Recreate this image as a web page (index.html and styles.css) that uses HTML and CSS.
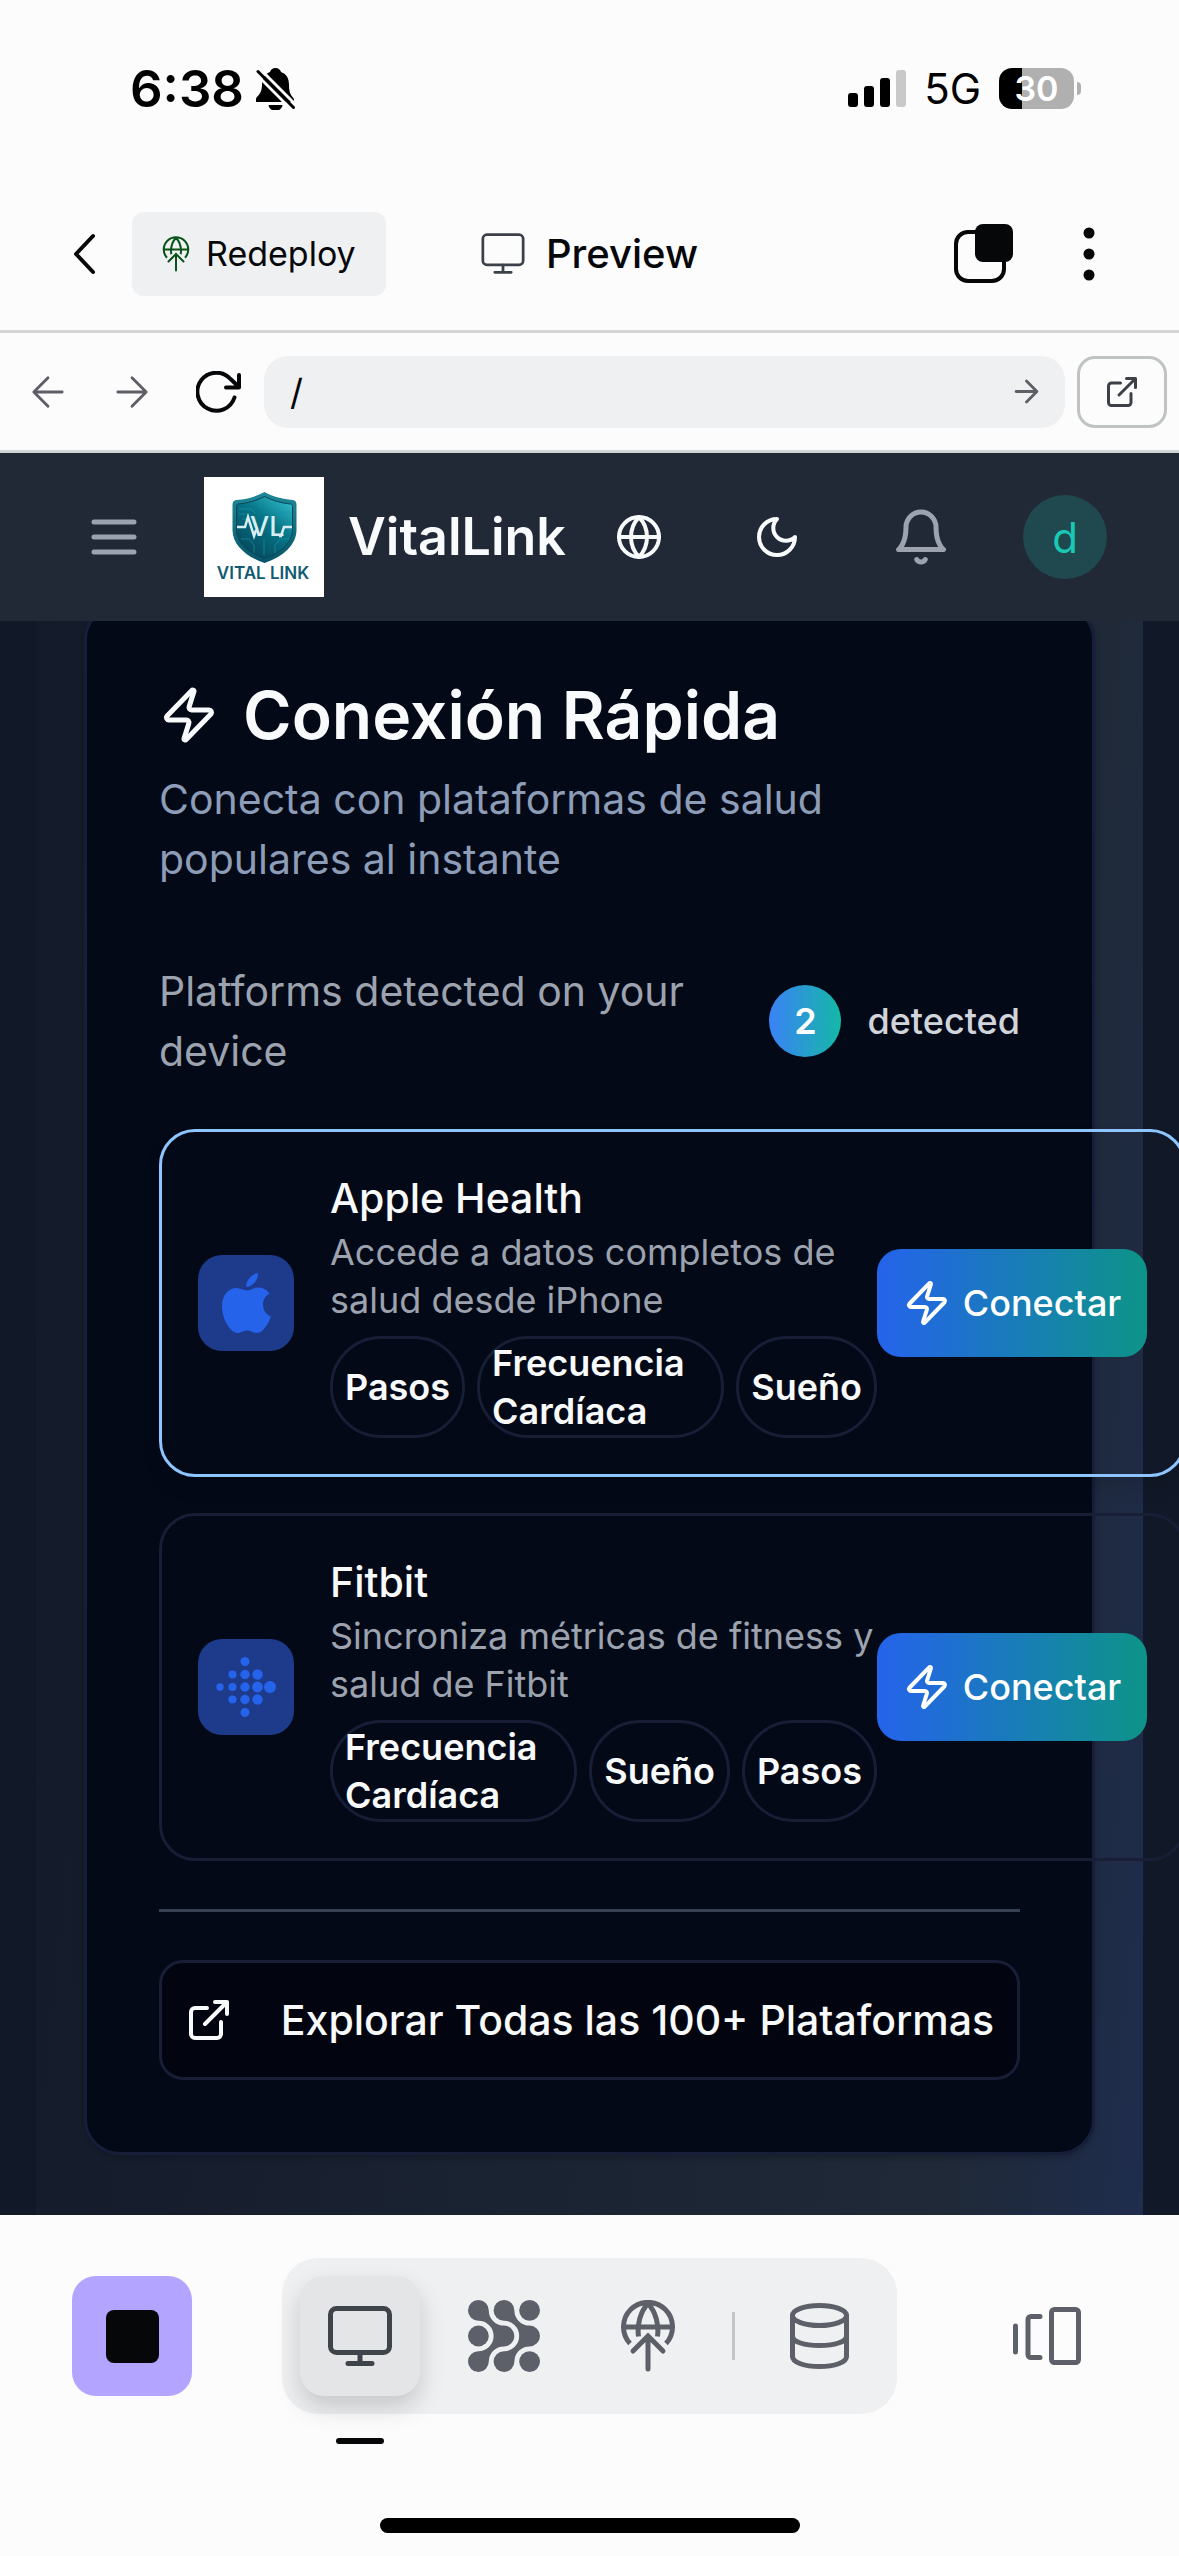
FILE: index.html
```html
<!DOCTYPE html>
<html lang="es">
<head>
<meta charset="utf-8">
<meta name="viewport" content="width=device-width, initial-scale=1">
<title>VitalLink Preview</title>
<link rel="stylesheet" href="styles.css">
</head>
<body>
<svg class="defs" aria-hidden="true">
  <symbol id="zap" viewBox="0 0 24 24"><path d="M4 14a1 1 0 0 1-.78-1.63l9.9-10.2a.5.5 0 0 1 .86.46l-1.92 6.02A1 1 0 0 0 13 10h7a1 1 0 0 1 .78 1.63l-9.9 10.2a.5.5 0 0 1-.86-.46l1.92-6.02A1 1 0 0 0 11 14z"/></symbol>
  <symbol id="monitor" viewBox="0 0 64 60"><rect x="2.500" y="2.500" width="59" height="44" rx="6"/><path d="M32 47v10M20 57.500h24"/></symbol>
  <symbol id="deploy" viewBox="0 0 54 72"><path d="M9 43.500A24.500 24.500 0 1 1 45 43.500M2.500 27h49M17.500 36.500C16 25 19 12 27 3.500C35 12 38 25 36.500 36.500"/><path stroke-linecap="round" d="M27 36v33M12 51l15-15 15 15"/></symbol>
  <symbol id="arrow" viewBox="0 0 36 36"><path d="M3 18h29M18 3l15 15-15 15"/></symbol>
  <symbol id="external" viewBox="0 0 24 24"><path d="M15 3h6v6M10 14 21 3M18 13v6a2 2 0 0 1-2 2H5a2 2 0 0 1-2-2V8a2 2 0 0 1 2-2h6"/></symbol>
</svg>

<header class="status">
  <div class="status-left">
    <span class="time">6:38</span>
    <svg class="mute" viewBox="0 0 39 42"><path d="M19.500 0c3 0 5 2 5.500 4 6 2 8 7 8 13 0 8 2 10 5 14v3H0v-3c0-3 6-4 6-14 0-7 3-11 8-13 .5-2 2.500-4 5.500-4zM12.500 37h14a7 5.500 0 0 1-14 0z"/><path d="M3 0l36 36" stroke="#fcfcfd" stroke-width="3"/><path d="M0 6l36 36" stroke="#fcfcfd" stroke-width="3"/><path d="M2 3.500l35.500 36" stroke="#000" stroke-width="3" stroke-linecap="round"/></svg>
  </div>
  <div class="status-right">
    <svg class="signal" viewBox="0 0 58 37"><rect y="23" width="10" height="14" rx="3"/><rect x="16" y="16" width="10" height="21" rx="3"/><rect x="32" y="8" width="10" height="29" rx="3"/><rect x="48" width="10" height="37" rx="3" fill="#c9c9c9"/></svg>
    <span class="network">5G</span>
    <span class="battery"><span class="level">30</span></span>
  </div>
</header>

<div class="appbar">
  <div class="appbar-left">
    <button class="plain" aria-label="Back"><svg class="chevron" viewBox="0 0 22 42"><path d="M20 3 3 21l17 18"/></svg></button>
    <button class="redeploy"><svg class="deploy-small"><use href="#deploy"/></svg>Redeploy</button>
  </div>
  <h1 class="appbar-title"><svg class="monitor-small"><use href="#monitor"/></svg>Preview</h1>
  <div class="appbar-right">
    <button class="plain" aria-label="Tabs"><svg class="tabs" viewBox="0 0 59 59"><rect x="2" y="8" width="48" height="49" rx="12" fill="none" stroke="#060709" stroke-width="4"/><rect x="21" width="38" height="38" rx="8"/></svg></button>
    <button class="plain" aria-label="More"><svg class="dots" viewBox="0 0 12 54"><circle cx="6" cy="6" r="5.500"/><circle cx="6" cy="27" r="5.500"/><circle cx="6" cy="48" r="5.500"/></svg></button>
  </div>
</div>

<div class="urlbar">
  <button class="nav-button" aria-label="Previous page"><svg class="arrow flip"><use href="#arrow"/></svg></button>
  <button class="nav-button" aria-label="Next page"><svg class="arrow"><use href="#arrow"/></svg></button>
  <button class="nav-button reload-button" aria-label="Reload"><svg class="reload" viewBox="0 0 46 42"><path d="M38.500 26.500a19 19 0 1 1-4-18.500L43 16M43 4v12.500H30"/></svg></button>
  <div class="address">
    <input class="path" type="text" value="/" aria-label="Path">
    <button class="plain" aria-label="Go"><svg class="arrow-small"><use href="#arrow"/></svg></button>
  </div>
  <button class="open" aria-label="Open in new window"><svg class="open-icon"><use href="#external"/></svg></button>
</div>

<nav class="site-nav">
  <button class="plain" aria-label="Menu"><svg class="menu" viewBox="0 0 24 24"><path d="M4 6h16M4 12h16M4 18h16"/></svg></button>
  <a class="brand" href="#">
    <svg class="logo" viewBox="0 0 120 120" role="img" aria-label="Vital Link">
      <defs>
        <linearGradient id="shield" x1="1" y1="0" x2="0.300" y2="1"><stop offset="0" stop-color="#35c6d6"/><stop offset="0.450" stop-color="#08788a"/><stop offset="1" stop-color="#05485c"/></linearGradient>
        <linearGradient id="rim" x1="0" y1="0" x2="0" y2="1"><stop offset="0" stop-color="#20899a"/><stop offset="1" stop-color="#075468"/></linearGradient>
      </defs>
      <rect width="120" height="120" fill="#fff"/>
      <path d="M60.500 15c9 5 18 7 28 8 3 .5 4 2 4 5v25c0 15-14 27-32 33-18-6-32-18-32-33V28c0-3 1-4.500 4-5 10-1 19-3 28-8z" fill="url(#rim)"/>
      <path d="M60.500 19.500c9 4.500 17 6.500 26 7.500 1.500.2 2 1 2 2.500v23c0 13-11 23-28 29-17-6-28-16-28-29v-23c0-1.500.5-2.300 2-2.500 9-1 17-3 26-7.500z" fill="url(#shield)" stroke="#064656"/>
      <path d="M35 32h12l4 4M35 37h7M86 35H76l-5-5M85 62h-9l-5 6v8M37 62h8l5 6v8M60 62v16M56 30v-7M65 31v-8M38 42h4M82 42h4" fill="none" stroke="#1597a6" stroke-width="0.700"/>
      <path d="M33 50h8l3-10 6 19 2-6M75 59h2l3-9h8" fill="none" stroke="#d6eef1" stroke-width="2.500"/>
      <text x="46" y="59" class="logo-vl">VL</text>
      <text x="59" y="102" class="logo-name">VITAL LINK</text>
    </svg>
    <span class="brand-name">VitalLink</span>
  </a>
  <div class="site-actions">
    <button class="site-action" aria-label="Language"><svg class="i48" viewBox="0 0 24 24"><circle cx="12" cy="12" r="10"/><path d="M12 2a14.500 14.500 0 0 0 0 20 14.500 14.500 0 0 0 0-20M2 12h20"/></svg></button>
    <button class="site-action" aria-label="Theme"><svg class="i48" viewBox="0 0 24 24"><path d="M12 3a6 6 0 0 0 9 9 9 9 0 1 1-9-9Z"/></svg></button>
    <button class="site-action alerts" aria-label="Notifications"><svg class="i60" viewBox="0 0 24 24"><path d="M6 8a6 6 0 0 1 12 0c0 7 3 9 3 9H3s3-2 3-9M10.300 21a1.940 1.940 0 0 0 3.400 0"/></svg></button>
    <button class="avatar">d</button>
  </div>
</nav>

<main class="viewport">
  <div class="page">
    <section class="card">
      <header class="card-header">
        <h2 class="card-title"><svg class="i60"><use href="#zap"/></svg>Conexión Rápida</h2>
        <p class="card-description">Conecta con plataformas de salud populares al instante</p>
      </header>
      <div class="summary">
        <p class="summary-text">Platforms detected on your device</p>
        <div class="count"><span class="count-badge">2</span>detected</div>
      </div>
      <div class="platforms">
        <article class="platform detected">
          <div class="platform-icon"><svg class="apple" viewBox="0 0 49 60"><path d="M36 0c.6 7-5.500 13.500-11.800 14C23.500 7.500 30 1 36 0z"/><path d="M25 17.500c3 0 6-3 11-3 5 0 9 2.500 11.500 6-5 3-6.500 7-6.500 11 0 6 3.500 10 8 12C47 49 41.500 60 35 60c-4 0-5.500-2.500-10-2.500S19 60 15.500 60C8 60 0 45 0 33.500 0 21.500 7 15 14 15c4.500 0 8 2.500 11 2.500z"/></svg></div>
          <div class="platform-body">
            <h3 class="platform-name">Apple Health</h3>
            <p class="platform-text">Accede a datos completos de salud desde iPhone</p>
            <div class="tags"><span class="tag">Pasos</span><span class="tag wide">Frecuencia Cardíaca</span><span class="tag">Sueño</span></div>
          </div>
          <button class="connect"><svg class="i48"><use href="#zap"/></svg>Conectar</button>
        </article>
        <article class="platform">
          <div class="platform-icon"><svg class="fitbit" viewBox="0 0 60 60"><circle cx="4" cy="30" r="3.700"/><circle cx="16.500" cy="17.500" r="4.100"/><circle cx="16.500" cy="30" r="4.100"/><circle cx="16.500" cy="42.500" r="4.100"/><circle cx="29" cy="4.500" r="4.500"/><circle cx="29" cy="17.500" r="4.700"/><circle cx="29" cy="30" r="4.700"/><circle cx="29" cy="42.500" r="4.700"/><circle cx="29" cy="55.500" r="4.500"/><circle cx="41.500" cy="17.500" r="5.200"/><circle cx="41.500" cy="30" r="5.400"/><circle cx="41.500" cy="42.500" r="5.200"/><circle cx="54" cy="30" r="6"/></svg></div>
          <div class="platform-body">
            <h3 class="platform-name">Fitbit</h3>
            <p class="platform-text">Sincroniza métricas de fitness y salud de Fitbit</p>
            <div class="tags"><span class="tag wide">Frecuencia Cardíaca</span><span class="tag">Sueño</span><span class="tag">Pasos</span></div>
          </div>
          <button class="connect"><svg class="i48"><use href="#zap"/></svg>Conectar</button>
        </article>
      </div>
      <footer class="card-footer">
        <button class="explore"><svg class="i48"><use href="#external"/></svg>Explorar Todas las 100+ Plataformas</button>
      </footer>
    </section>
  </div>
</main>

<footer class="dock">
  <div class="dock-row">
    <button class="stop" aria-label="Stop"><span class="stop-mark"></span></button>
    <div class="tools">
      <button class="tool active" aria-label="Preview"><svg class="monitor-large"><use href="#monitor"/></svg></button>
      <button class="tool" aria-label="Agent"><svg class="agent" viewBox="0 0 72 72"><path id="link" d="M10.400 20.800A10.400 10.400 0 1 1 20.800 10.400A15.200 15.200 0 0 0 36 25.600A10.400 10.400 0 0 1 36 46.400A15.200 15.200 0 0 0 20.800 61.600A10.400 10.400 0 1 1 10.400 51.200A15.200 15.200 0 0 0 10.400 20.800z"/><use href="#link" x="25.600"/><circle cx="10.400" cy="36" r="10.400"/><circle cx="61.600" cy="10.400" r="10.400"/><circle cx="61.600" cy="61.600" r="10.400"/></svg></button>
      <button class="tool" aria-label="Deploy"><svg class="deploy-large"><use href="#deploy"/></svg></button>
      <span class="separator"></span>
      <button class="tool" aria-label="Database"><svg class="database" viewBox="0 0 59 66"><ellipse cx="29.500" cy="12.500" rx="27" ry="10"/><path d="M2.500 12.500v41c0 6 12 10 27 10s27-4 27-10v-41M2.500 33c0 6 12 9.500 27 9.500s27-3.500 27-9.500"/></svg></button>
    </div>
    <button class="switcher" aria-label="Windows"><svg class="windows" viewBox="0 0 68 58"><rect x="38.500" y="2.500" width="27" height="53" rx="3"/><path d="M27 9.500H18a3 3 0 0 0-3 3v35a3 3 0 0 0 3 3h9M2.500 19v26"/></svg></button>
  </div>
  <div class="home-indicator"></div>
</footer>
</body>
</html>
```
FILE: styles.css
```css
* { box-sizing: border-box; }

body {
  margin: 0;
  min-height: 100vh;
  display: flex;
  flex-direction: column;
  overflow-x: hidden;
  background: #fcfcfd;
  color: #060709;
  font-family: Inter, "Liberation Sans", sans-serif;
}

h1, h2, h3, p { margin: 0; }
svg { display: block; flex: none; }
button, input { font: inherit; color: inherit; border: 0; margin: 0; padding: 0; background: none; }
button { display: flex; align-items: center; justify-content: center; flex: none; }
.defs { display: none; }

/* Status bar */
.status {
  height: 177px;
  padding: 0 98px 0 130px;
  display: flex;
  align-items: center;
  justify-content: space-between;
  color: #000;
}
.status-left, .status-right { display: flex; align-items: center; }
.status-left { gap: 12px; }
.status-right { gap: 18px; }
.time { font-size: 51px; font-weight: 600; line-height: 60px; }
.mute { width: 39px; height: 42px; }
.signal { width: 58px; height: 37px; }
.network { font-size: 42px; line-height: 48px; }
.battery {
  position: relative;
  width: 75px;
  height: 41px;
  margin-right: 7px;
  border-radius: 13px;
  background: linear-gradient(90deg, #000 31%, #b0b0b0 31%);
  display: flex;
  align-items: center;
  justify-content: center;
}
.battery::after {
  content: "";
  position: absolute;
  left: 78px;
  width: 4px;
  height: 13px;
  border-radius: 0 4px 4px 0;
  background: #b0b0b0;
}
.level { color: #fff; font-size: 34px; font-weight: 600; line-height: 41px; }

/* App bar */
.appbar {
  height: 156px;
  padding: 0 84px;
  border-bottom: 3px solid #d4d4d5;
  display: grid;
  grid-template-columns: 1fr auto 1fr;
  align-items: center;
}
.appbar-left, .appbar-right { display: flex; align-items: center; }
.appbar-left { gap: 36px; margin-left: -12px; }
.appbar-right { justify-content: flex-end; gap: 70px; }
.chevron { width: 24px; height: 42px; fill: none; stroke: #060709; stroke-width: 4; stroke-linecap: round; stroke-linejoin: round; }
.redeploy {
  height: 84px;
  padding: 0 30px;
  gap: 16px;
  border-radius: 12px;
  background: #eff0f2;
  font-size: 34px;
}
.deploy-small { width: 28px; height: 36px; fill: none; stroke: #0b5216; stroke-width: 4; }
.appbar-title { display: flex; align-items: center; gap: 21px; font-size: 40px; font-weight: 500; }
.monitor-small { width: 44px; height: 41px; fill: none; stroke: #3c4049; stroke-width: 4; stroke-linecap: round; }
.tabs { width: 59px; height: 59px; fill: #060709; }
.dots { width: 12px; height: 54px; fill: #060709; }

/* Address bar */
.urlbar {
  height: 120px;
  padding: 0 12px 0 6px;
  border-bottom: 3px solid #d0d4d3;
  display: flex;
  align-items: center;
}
.nav-button { width: 84px; height: 72px; color: #5d5e66; }
.reload-button { width: 90px; }
.arrow, .arrow-small, .reload { fill: none; stroke: currentColor; stroke-width: 3; stroke-linecap: round; stroke-linejoin: round; }
.arrow { width: 34px; height: 34px; }
.flip { transform: scaleX(-1); }
.arrow-small { width: 25px; height: 25px; color: #5d5e66; stroke-width: 4; }
.reload { width: 46px; height: 42px; color: #060709; stroke-width: 4; }
.address {
  flex: 1;
  min-width: 0;
  height: 72px;
  margin-right: 12px;
  padding: 0 26px;
  border-radius: 24px;
  background: #eff0f2;
  display: flex;
  align-items: center;
}
.path { flex: 1; min-width: 0; font-size: 36px; outline: none; }
.open { width: 90px; height: 72px; border: 3px solid #bfc4c3; border-radius: 18px; }
.open-icon { width: 36px; height: 36px; fill: none; stroke: #3c4049; stroke-width: 2; stroke-linejoin: round; stroke-linecap: round; }

/* Site navigation */
.site-nav {
  position: relative;
  z-index: 1;
  height: 168px;
  padding: 0 72px 0 84px;
  background: #212937;
  display: flex;
  align-items: center;
}
.menu, .i48, .i60 { fill: none; stroke: currentColor; stroke-width: 2; stroke-linecap: round; stroke-linejoin: round; }
.menu { width: 60px; height: 60px; color: #9ca3af; }
.i48 { width: 48px; height: 48px; }
.i60 { width: 60px; height: 60px; }
.brand { margin-left: 60px; display: flex; align-items: center; gap: 24px; color: #f9fafb; text-decoration: none; }
.logo { width: 120px; height: 120px; }
.logo-vl { font-size: 27px; font-weight: 500; fill: #d6eef1; }
.logo-name { font-size: 17px; font-weight: 600; fill: #115a72; text-anchor: middle; }
.brand-name { font-size: 52px; font-weight: 600; line-height: 60px; }
.site-actions { margin-left: auto; display: flex; align-items: center; gap: 30px; color: #f9fafb; }
.site-action { width: 108px; height: 108px; }
.alerts { width: 120px; color: #9ca3af; }
.avatar { width: 84px; height: 84px; margin-left: 12px; border-radius: 50%; background: #20494f; color: #19c9b5; font-size: 42px; }

/* Previewed page */
.viewport { flex: 1; padding: 0 36px; overflow: hidden; background: #111827; }
.page {
  display: flow-root;
  height: 100%;
  padding: 0 48px 60px;
  background: linear-gradient(96deg, #131a29 0%, #1f2937 84%, #1f2d4e 100%);
}
.card {
  margin-top: -17px;
  padding: 72px;
  border: 3px solid #161e3a;
  border-radius: 36px;
  background: #030917;
  color: #f9fafb;
  box-shadow: 0 3px 6px rgba(0, 0, 0, 0.2);
}
.card-header { margin-bottom: 72px; }
.card-title { display: flex; align-items: center; gap: 24px; font-size: 66px; font-weight: 600; line-height: 72px; }
.card-description { margin-top: 18px; font-size: 41px; line-height: 60px; color: #8d9db7; }
.summary { display: flex; align-items: center; justify-content: space-between; gap: 24px; }
.summary-text { font-size: 41px; line-height: 60px; color: #9ca3af; }
.count { display: flex; align-items: center; gap: 26px; font-size: 36px; font-weight: 500; color: #d1d5db; }
.count-badge {
  width: 72px;
  height: 72px;
  border-radius: 50%;
  background: linear-gradient(90deg, #3b82f6, #14b8a6);
  color: #fff;
  font-weight: 600;
  display: flex;
  align-items: center;
  justify-content: center;
}

/* The rows are wider than the card and run past its right edge */
.platforms { margin: 48px -166px 48px 0; display: flex; flex-direction: column; gap: 36px; }
.platform {
  padding: 36px;
  border: 3px solid #171e36;
  border-radius: 36px;
  display: flex;
  align-items: center;
}
.detected { border-color: #8ec5ff; box-shadow: 0 12px 18px rgba(0, 0, 0, 0.1); }
.platform-icon {
  flex: none;
  width: 96px;
  height: 96px;
  margin-right: 36px;
  border-radius: 24px;
  background: #1e3a8a;
  display: flex;
  align-items: center;
  justify-content: center;
}
.apple { width: 49px; height: 60px; fill: #2563eb; }
.fitbit { width: 60px; height: 60px; fill: #2563eb; }
.platform-body { flex: 1; min-width: 0; }
.platform-name { font-size: 41px; font-weight: 500; line-height: 60px; }
.platform-text { font-size: 36px; line-height: 48px; color: #9ca3af; }
.tags { margin-top: 12px; display: flex; gap: 12px; }
.tag {
  padding: 0 12px;
  border: 3px solid #171e36;
  border-radius: 51px;
  display: flex;
  align-items: center;
  font-size: 36px;
  font-weight: 600;
  line-height: 48px;
}
.wide { flex: 1; }
.connect {
  width: 270px;
  height: 108px;
  gap: 12px;
  border-radius: 24px;
  background: linear-gradient(90deg, #2563eb, #0d9488);
  color: #fff;
  font-size: 36px;
  font-weight: 500;
}
.card-footer { padding-top: 48px; border-top: 3px solid #374151; }
.explore {
  width: 100%;
  height: 120px;
  gap: 48px;
  border: 3px solid #171e36;
  border-radius: 24px;
  background: #02040f;
  font-size: 41px;
  font-weight: 500;
  white-space: nowrap;
}

/* Bottom dock */
.dock { height: 342px; padding: 43px 72px 24px; display: flex; flex-direction: column; justify-content: space-between; }
.dock-row { display: grid; grid-template-columns: 1fr auto 1fr; align-items: center; }
.stop { width: 120px; height: 120px; border-radius: 24px; background: #b2a4ff; }
.stop-mark { width: 53px; height: 53px; border-radius: 8px; background: #060709; }
.tools { padding: 18px; border-radius: 36px; background: #eff0f2; display: flex; align-items: center; gap: 24px; }
.tool { position: relative; width: 120px; height: 120px; border-radius: 24px; color: #5d6068; }
.tool svg, .windows { fill: none; stroke: currentColor; stroke-width: 5; }
.tool .agent { width: 72px; height: 72px; fill: currentColor; stroke: none; }
.active { background: #e4e5e7; color: #3f434a; box-shadow: 0 12px 24px rgba(0, 0, 0, 0.17); }
.active::after {
  content: "";
  position: absolute;
  top: 162px;
  left: 36px;
  width: 48px;
  height: 6px;
  border-radius: 3px;
  background: #060709;
}
.monitor-large { width: 64px; height: 60px; stroke-linecap: round; }
.deploy-large { width: 54px; height: 72px; }
.separator { width: 3px; height: 48px; background: #c4c5c7; }
.database { width: 59px; height: 66px; }
.switcher { justify-self: end; width: 120px; height: 120px; }
.windows { width: 68px; height: 58px; color: #5d6068; stroke-linecap: round; }
.home-indicator { align-self: center; width: 420px; height: 15px; border-radius: 8px; background: #000; }
```
